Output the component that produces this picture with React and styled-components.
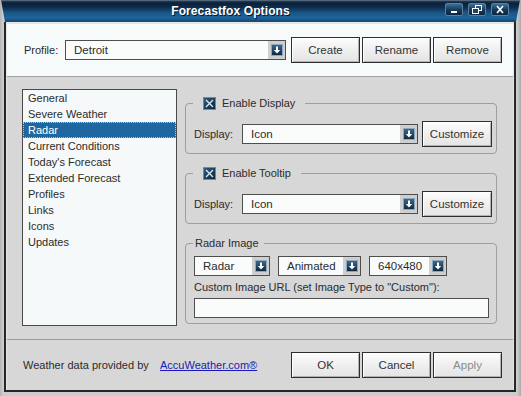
import React from "react";
import styled, { createGlobalStyle } from "styled-components";

const Global = createGlobalStyle`
  html, body { margin: 0; padding: 0; background: #c6c6c6; }
  body {
    font-family: "Liberation Sans", Arial, sans-serif;
    font-size: 11px;
    color: #2b2b2b;
  }
  * { box-sizing: border-box; }
`;

const Window = styled.div`
  width: 521px;
  height: 396px;
  display: flex;
  flex-direction: column;
  background: linear-gradient(to right, #b4b4b4 0, #cdcdcd 3px, #cdcdcd calc(100% - 4px), #a9a9a9 100%);
`;

const TitleBar = styled.div`
  height: 22px;
  flex: none;
  display: flex;
  align-items: center;
  clip-path: polygon(1px 0, calc(100% - 1px) 0, calc(100% - 5px) 100%, 5px 100%);
  background: linear-gradient(
    to bottom,
    #7d8c9a 0,
    #26405a 1px,
    #0b2139 3px,
    #0e2b4a 7px,
    #1a5788 13px,
    #1e649b 18px,
    #164b77 21px,
    #164b77 22px
  );
`;

const Title = styled.div`
  flex: 1;
  text-align: center;
  padding-left: 16px;
  color: #ffffff;
  font-weight: bold;
  font-size: 12px;
  letter-spacing: 0.1px;
  text-shadow: 1px 1px 0 #06182b;
`;

const WinButtons = styled.div`
  display: flex;
  gap: 5px;
  padding-right: 12px;
  margin-top: -4px;
`;

const WinButton = styled.div`
  width: 18px;
  height: 13px;
  border: 1px solid #5e7f9d;
  border-radius: 2px;
  background: linear-gradient(to bottom, #3f6f97, #14375a 55%, #0b2640);
  display: flex;
  align-items: center;
  justify-content: center;
`;

const Frame = styled.div`
  flex: 1;
  margin: 0 5px 4px 4px;
  border: 2px solid #262626;
  border-top: 0;
  padding: 2px 1px 0 1px;
  background: #e6e6e6;
  display: flex;
  flex-direction: column;
`;

const ProfileBar = styled.div`
  height: 53px;
  flex: none;
  background: #f7fafa;
  border-bottom: 1px solid #a2a2a2;
  display: flex;
  align-items: center;
  padding-left: 17px;
`;

const Label = styled.span`
  width: ${(p) => p.$w}px;
  flex: none;
  white-space: nowrap;
`;

const ButtonRow = styled.div`
  display: flex;
  gap: 2px;
  margin-left: ${(p) => p.$ml || 0};
`;

const Button = styled.div`
  width: ${(p) => p.$w || 69}px;
  height: 26px;
  flex: none;
  margin-left: ${(p) => p.$ml || 0}px;
  border: 1px solid #2e2e2e;
  background: linear-gradient(to bottom, #fdfdfd, #efefef 50%, #e4e4e4);
  box-shadow: inset 1px 1px 0 #ffffff, inset -1px -1px 0 #b2b2b2;
  display: flex;
  align-items: center;
  justify-content: center;
  color: ${(p) => (p.$disabled ? "#8c8c8c" : "#333333")};
  font-size: 11.5px;
`;

const Select = styled.div`
  width: ${(p) => p.$w}px;
  height: 20px;
  flex: none;
  border: 1px solid #4e4e4e;
  background: #fafcfc;
  display: flex;
  align-items: stretch;
`;

const SelectText = styled.div`
  flex: 1;
  padding-left: 8px;
  display: flex;
  align-items: center;
  font-size: 11.5px;
  color: #2b2b2b;
  white-space: nowrap;
`;

const ArrowCell = styled.div`
  width: 17px;
  flex: none;
  background: #cfcfcf;
  display: flex;
  align-items: center;
  justify-content: center;
`;

const Main = styled.div`
  flex: 1;
  display: flex;
  align-items: flex-start;
  gap: 8px;
  padding: 12px 15px 0 15px;
  background: #d7d7d7;
`;

const ListBox = styled.div`
  width: 155px;
  height: 237px;
  flex: none;
  border: 1px solid #4a4a4a;
  background: #f6f9f9;
  display: flex;
  flex-direction: column;
`;

const ListItem = styled.div`
  height: 16px;
  line-height: 14px;
  padding-left: 4px;
  font-size: 11px;
  white-space: nowrap;
  color: ${(p) => (p.$sel ? "#ffffff" : "#2b2b2b")};
  background: ${(p) => (p.$sel ? "#1f67a0" : "transparent")};
  border: 1px dotted ${(p) => (p.$sel ? "#d6c58a" : "transparent")};
`;

const Column = styled.div`
  width: 312px;
  flex: none;
  margin-top: 7px;
  display: flex;
  flex-direction: column;
  gap: 12px;
`;

const Group = styled.fieldset`
  margin: 0;
  min-width: 0;
  padding: 0 3px ${(p) => p.$pb || 6}px 8px;
  border: 1px solid #9e9e9e;
  border-radius: 4px;
`;

const Legend = styled.legend`
  margin-left: -1px;
  padding: ${(p) => (p.$check ? "0 10px 0 10px" : "0 5px 0 2px")};
  height: 14px;
  line-height: 14px;
  font-size: 11px;
`;

const LegendInner = styled.span`
  display: flex;
  align-items: center;
  gap: 6px;
  height: 14px;
`;

const Row = styled.div`
  display: flex;
  align-items: center;
  gap: ${(p) => p.$gap || 0}px;
  margin-top: ${(p) => p.$mt || 0}px;
`;

const Caption = styled.div`
  margin-top: 5px;
  height: 13px;
  line-height: 13px;
  font-size: 11px;
  white-space: nowrap;
`;

const TextInput = styled.div`
  margin-top: 4px;
  width: 295px;
  height: 20px;
  border: 1px solid #4e4e4e;
  background: #fafcfc;
`;

const Footer = styled.div`
  height: 51px;
  flex: none;
  border-top: 1px solid #9c9c9c;
  background: #d7d7d7;
  display: flex;
  align-items: center;
  padding-left: 16px;
  padding-right: 11px;
  font-size: 11px;
`;

const Credit = styled.span`
  width: 137px;
  flex: none;
  white-space: nowrap;
`;

const Link = styled.span`
  color: #1a1ab8;
  text-decoration: underline;
  white-space: nowrap;
`;

const ArrowIcon = () => (
  <svg width="12" height="12" viewBox="0 0 12 12">
    <defs>
      <linearGradient id="ag" x1="0" y1="0" x2="0" y2="1">
        <stop offset="0" stopColor="#3d6a90" />
        <stop offset="1" stopColor="#0c2741" />
      </linearGradient>
    </defs>
    <rect x="0.5" y="0.5" width="11" height="11" fill="url(#ag)" stroke="#8ea6bb" />
    <rect x="5" y="2.5" width="2" height="4" fill="#ffffff" />
    <polygon points="2.8,6 9.2,6 6,9.4" fill="#ffffff" />
  </svg>
);

const Check = () => (
  <svg width="13" height="13" viewBox="0 0 13 13">
    <defs>
      <linearGradient id="cg" x1="0" y1="0" x2="1" y2="1">
        <stop offset="0" stopColor="#2f5f86" />
        <stop offset="1" stopColor="#0a2238" />
      </linearGradient>
    </defs>
    <rect x="0.5" y="0.5" width="12" height="12" fill="url(#cg)" stroke="#6d8aa3" />
    <path d="M3 3 L10 10 M10 3 L3 10" stroke="#dbe7f1" strokeWidth="1.4" />
  </svg>
);

const Combo = ({ w, value }) => (
  <Select $w={w}>
    <SelectText>{value}</SelectText>
    <ArrowCell>
      <ArrowIcon />
    </ArrowCell>
  </Select>
);

const items = [
  "General",
  "Severe Weather",
  "Radar",
  "Current Conditions",
  "Today's Forecast",
  "Extended Forecast",
  "Profiles",
  "Links",
  "Icons",
  "Updates",
];

export default function App() {
  return (
    <>
      <Global />
      <Window>
        <TitleBar>
          <Title>Forecastfox Options</Title>
          <WinButtons>
            <WinButton>
              <svg width="10" height="9" viewBox="0 0 10 9">
                <rect x="2" y="6" width="6" height="2" fill="#ffffff" />
              </svg>
            </WinButton>
            <WinButton>
              <svg width="10" height="9" viewBox="0 0 10 9">
                <rect x="3.5" y="0.5" width="6" height="5" fill="none" stroke="#ffffff" />
                <rect x="0.5" y="3.5" width="6" height="5" fill="#1a4468" stroke="#ffffff" />
              </svg>
            </WinButton>
            <WinButton>
              <svg width="10" height="9" viewBox="0 0 10 9">
                <path d="M2 1 L8 8 M8 1 L2 8" stroke="#ffffff" strokeWidth="1.6" />
              </svg>
            </WinButton>
          </WinButtons>
        </TitleBar>
        <Frame>
          <ProfileBar>
            <Label $w={41}>Profile:</Label>
            <Combo w={221} value="Detroit" />
            <ButtonRow $ml="5px">
              <Button>Create</Button>
              <Button>Rename</Button>
              <Button>Remove</Button>
            </ButtonRow>
          </ProfileBar>
          <Main>
            <ListBox>
              {items.map((it) => (
                <ListItem key={it} $sel={it === "Radar"}>
                  {it}
                </ListItem>
              ))}
            </ListBox>
            <Column>
              <Group>
                <Legend $check>
                  <LegendInner>
                    <Check />
                    Enable Display
                  </LegendInner>
                </Legend>
                <Row $mt={11}>
                  <Label $w={48}>Display:</Label>
                  <Combo w={176} value="Icon" />
                  <Button $w={70} $ml={4}>Customize</Button>
                </Row>
              </Group>
              <Group>
                <Legend $check>
                  <LegendInner>
                    <Check />
                    Enable Tooltip
                  </LegendInner>
                </Legend>
                <Row $mt={11}>
                  <Label $w={48}>Display:</Label>
                  <Combo w={176} value="Icon" />
                  <Button $w={70} $ml={4}>Customize</Button>
                </Row>
              </Group>
              <Group $pb={5}>
                <Legend>Radar Image</Legend>
                <Row $mt={6} $gap={8}>
                  <Combo w={76} value="Radar" />
                  <Combo w={83} value="Animated" />
                  <Combo w={78} value="640x480" />
                </Row>
                <Caption>Custom Image URL (set Image Type to "Custom"):</Caption>
                <TextInput />
              </Group>
            </Column>
          </Main>
          <Footer>
            <Credit>Weather data provided by</Credit>
            <Link>AccuWeather.com®</Link>
            <ButtonRow $ml="auto">
              <Button>OK</Button>
              <Button>Cancel</Button>
              <Button $disabled>Apply</Button>
            </ButtonRow>
          </Footer>
        </Frame>
      </Window>
    </>
  );
}
